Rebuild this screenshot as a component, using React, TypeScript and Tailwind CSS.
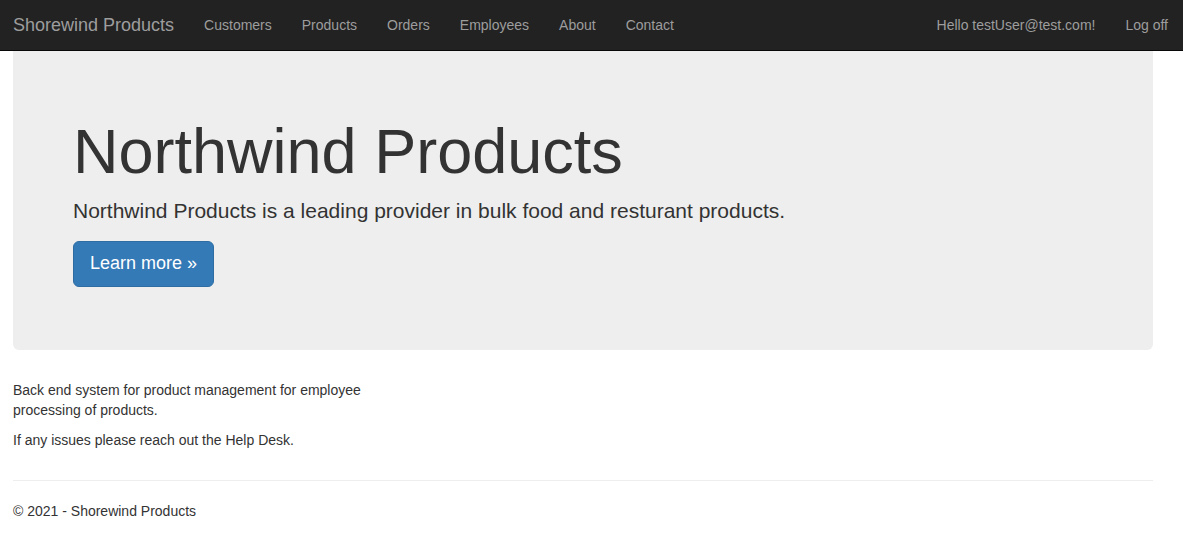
import React from "react";

const links = ["Customers", "Products", "Orders", "Employees", "About", "Contact"];

const App = () => {
  return (
    <div className="min-h-screen bg-white text-[14px] leading-[20px] text-[#333] font-['Liberation_Sans',Arial,sans-serif]">
      {/* Navbar */}
      <nav className="flex h-[51px] items-start justify-between border-b border-[#080808] bg-[#222]">
        <div className="flex">
          <a className="block h-[50px] pl-[13px] pr-[15px] py-[15px] text-[18px] leading-[20px] text-[#9d9d9d]">
            Shorewind Products
          </a>
          <ul className="flex">
            {links.map((l) => (
              <li key={l}>
                <a className="block px-[15px] py-[15px] text-[#9d9d9d]">{l}</a>
              </li>
            ))}
          </ul>
        </div>
        <ul className="flex">
          <li>
            <a className="block px-[15px] py-[15px] text-[#9d9d9d]">Hello testUser@test.com!</a>
          </li>
          <li>
            <a className="block px-[15px] py-[15px] text-[#9d9d9d]">Log off</a>
          </li>
        </ul>
      </nav>

      {/* Body */}
      <div className="pl-[13px]">
        <div className="mb-[30px] w-[1140px] rounded-b-[6px] bg-[#eee] px-[60px] py-[48px]">
          <h1 className="mt-[18px] mb-[10px] text-[63px] leading-[1.1] font-medium">Northwind Products</h1>
          <p className="mb-[15px] text-[21px] leading-[30px] font-extralight">
            Northwind Products is a leading provider in bulk food and resturant products.
          </p>
          <p className="mb-[15px]">
            <a className="inline-block rounded-[6px] border border-[#2e6da4] bg-[#337ab7] px-[16px] py-[10px] text-[18px] leading-[1.3333] text-white">
              Learn more &raquo;
            </a>
          </p>
        </div>

        <div className="flow-root w-[360px]">
          <p className="mb-[10px]">
            Back end system for product management for employee processing of products.
          </p>
          <p className="mb-[10px]">If any issues please reach out the Help Desk.</p>
        </div>

        <hr className="mt-[20px] mb-[20px] w-[1140px] border-t border-[#eee]" />
        <footer>
          <p className="mb-[10px]">&copy; 2021 - Shorewind Products</p>
        </footer>
      </div>
    </div>
  );
};

export default App;
